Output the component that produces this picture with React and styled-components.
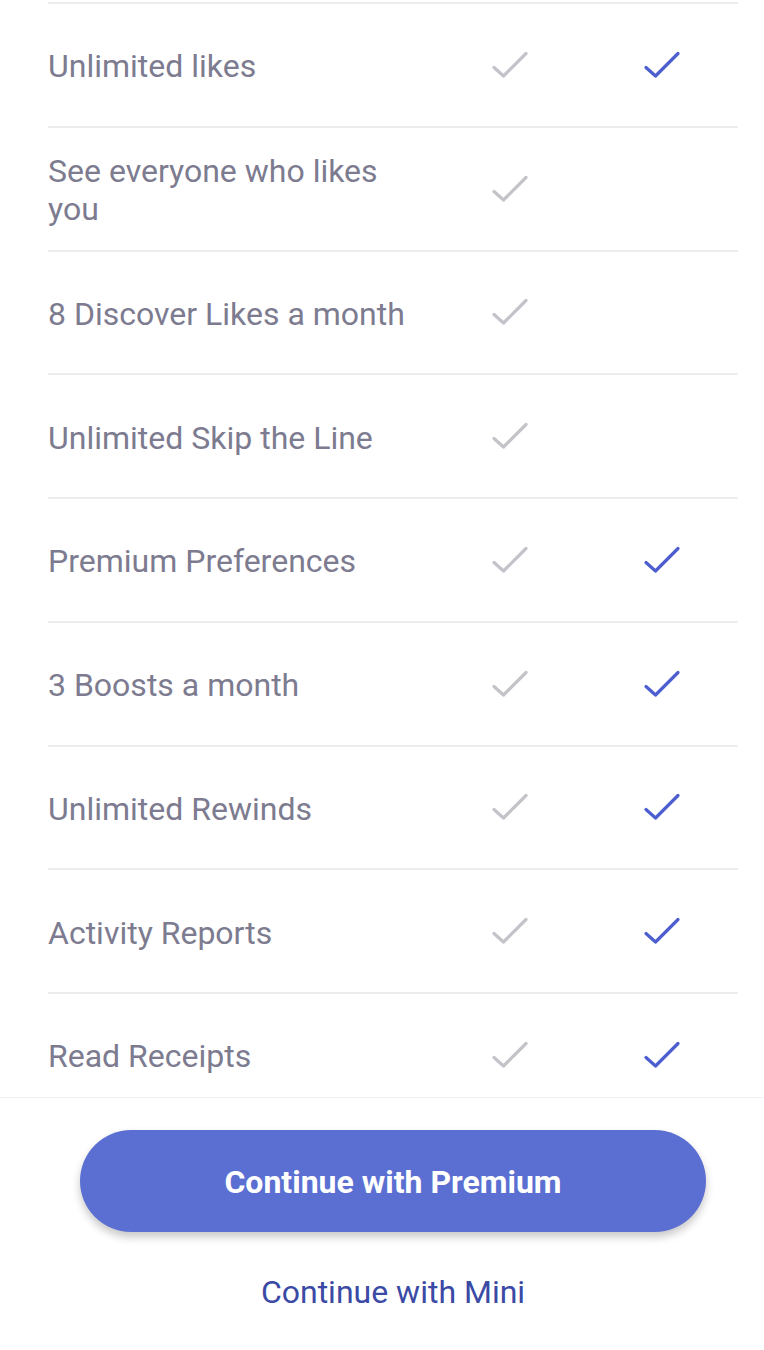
import React from "react";
import styled, { createGlobalStyle } from "styled-components";

const GlobalStyle = createGlobalStyle`
  html, body {
    margin: 0;
    padding: 0;
    background: #ffffff;
  }
  body {
    font-family: Roboto, "Noto Sans", "Liberation Sans", sans-serif;
  }
`;

const features = [
  { label: "Unlimited likes", mini: true, premium: true },
  { label: "See everyone who likes you", mini: true, premium: false },
  { label: "8 Discover Likes a month", mini: true, premium: false },
  { label: "Unlimited Skip the Line", mini: true, premium: false },
  { label: "Premium Preferences", mini: true, premium: true },
  { label: "3 Boosts a month", mini: true, premium: true },
  { label: "Unlimited Rewinds", mini: true, premium: true },
  { label: "Activity Reports", mini: true, premium: true },
  { label: "Read Receipts", mini: true, premium: true },
];

function Check({ color }) {
  return (
    <svg width="38" height="30" viewBox="0 0 38 30" fill="none">
      <path
        d="M3 17.5 L12.5 26 L35 3.5"
        stroke={color}
        strokeWidth="3.2"
        strokeLinecap="round"
        strokeLinejoin="round"
      />
    </svg>
  );
}

export default function App() {
  return (
    <>
      <GlobalStyle />
      <Screen>
        <List>
          {features.map((f) => (
            <Row key={f.label}>
              <Label>{f.label}</Label>
              <Cell>{f.mini && <Check color="#c3c3c9" />}</Cell>
              <Cell>{f.premium && <Check color="#4d5fcf" />}</Cell>
            </Row>
          ))}
        </List>
        <Footer>
          <PrimaryButton>Continue with Premium</PrimaryButton>
          <LinkButton>Continue with Mini</LinkButton>
        </Footer>
      </Screen>
    </>
  );
}

const Screen = styled.div`
  width: 764px;
  height: 1350px;
  display: flex;
  flex-direction: column;
  overflow: hidden;
  background: #ffffff;
`;

const List = styled.div`
  height: 1097px;
  padding: 2px 26px 0 48px;
  box-sizing: border-box;
  overflow: hidden;
  flex-shrink: 0;
`;

const Row = styled.div`
  display: grid;
  grid-template-columns: 386px 152px 152px;
  align-items: center;
  height: 123.75px;
  box-sizing: border-box;
  border-top: 2px solid #ededf0;
`;

const Label = styled.div`
  font-size: 32px;
  line-height: 38px;
  color: #7c7b8f;
  padding-right: 20px;
  padding-top: 3px;
`;

const Cell = styled.div`
  display: flex;
  justify-content: center;
  align-items: center;
`;

const Footer = styled.div`
  flex: 1;
  border-top: 1px solid #f1f1f3;
  display: flex;
  flex-direction: column;
  align-items: center;
  padding: 32px 0 0 22px;
`;

const PrimaryButton = styled.button`
  width: 626px;
  height: 102px;
  padding-top: 2px;
  border: none;
  border-radius: 51px;
  background: #5b6fd2;
  color: #ffffff;
  font-family: Roboto, "Liberation Sans", sans-serif;
  font-size: 32px;
  font-weight: 700;
  box-shadow: 0 5px 8px rgba(0, 0, 0, 0.22);
  cursor: pointer;
`;

const LinkButton = styled.button`
  margin-top: 40px;
  border: none;
  background: none;
  color: #3a4aa5;
  font-family: Roboto, "Liberation Sans", sans-serif;
  font-size: 32px;
  font-weight: 400;
  cursor: pointer;
`;
